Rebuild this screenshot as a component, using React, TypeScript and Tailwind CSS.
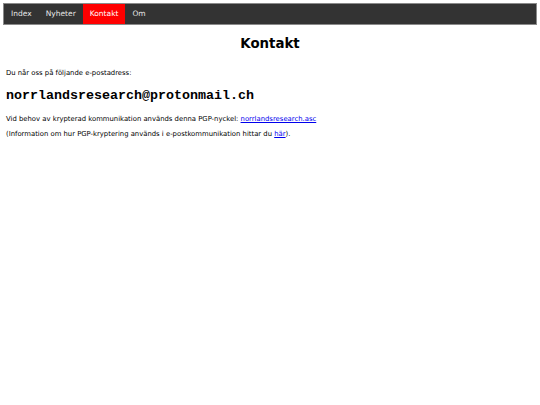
import React from "react";

export default function App() {
  return (
    <div className="min-h-[405px] bg-white p-[3px] text-black [font-family:'DejaVu_Sans',Verdana,sans-serif]">
      <nav className="flex border border-[#8a8a8a] bg-[#333333] text-[7.5px] text-[#e6e6e6]">
        <a className="px-[7px] py-[5px] leading-[10px]">Index</a>
        <a className="px-[7px] py-[5px] leading-[10px]">Nyheter</a>
        <a className="bg-[#ff0000] px-[7px] py-[5px] leading-[10px] text-white">Kontakt</a>
        <a className="px-[7px] py-[5px] leading-[10px]">Om</a>
      </nav>
      <h1 className="mt-[11px] text-center text-[13.33px] font-bold leading-[16px]">Kontakt</h1>
      <div className="px-[3px] text-[6.85px]">
        <p className="mt-[16px] leading-[10px]">Du når oss på följande e-postadress:</p>
        <p className="mt-[10px] text-[13.33px] font-bold leading-[16px] [font-family:'Liberation_Mono','Courier_New',monospace]">
          norrlandsresearch@protonmail.ch
        </p>
        <p className="mt-[10px] leading-[10px]">
          Vid behov av krypterad kommunikation används denna PGP-nyckel:{" "}
          <a href="#" className="text-[#0000ee] underline">norrlandsresearch.asc</a>
        </p>
        <p className="mt-[5px] leading-[10px]">
          (Information om hur PGP-kryptering används i e-postkommunikation hittar du{" "}
          <a href="#" className="text-[#0000ee] underline">här</a>).
        </p>
      </div>
    </div>
  );
}
